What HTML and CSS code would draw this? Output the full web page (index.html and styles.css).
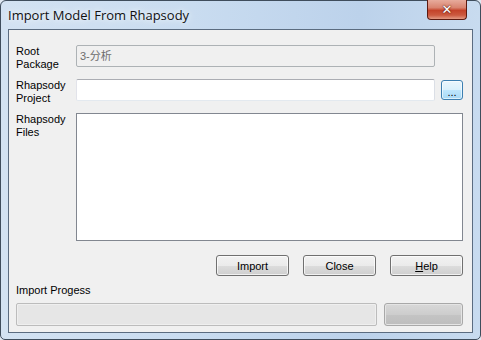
FILE: index.html
```html
<!DOCTYPE html>
<html>
<head>
<title>Import Model From Rhapsody</title>
<link rel="stylesheet" href="styles.css">
</head>
<body>

<div class="window">
    <!-- Title bar -->
    <div class="titlebar">
        <span class="title">Import Model From Rhapsody</span>
        <span class="close-btn">&#x2715;</span>
    </div>

    <!-- Dialog body -->
    <div class="client">
        <div class="field-row">
            <label class="field-label">Root<br>Package</label>
            <div class="textbox disabled">3-分析</div>
        </div>

        <div class="field-row">
            <label class="field-label">Rhapsody<br>Project</label>
            <div class="textbox"></div>
            <button class="browse-btn">...</button>
        </div>

        <div class="field-row files-row">
            <label class="field-label">Rhapsody<br>Files</label>
            <div class="listbox"></div>
        </div>

        <div class="button-row">
            <button class="btn">Import</button>
            <button class="btn">Close</button>
            <button class="btn"><u>H</u>elp</button>
        </div>

        <div class="progress-label">Import Progess</div>
        <div class="progress-row">
            <div class="progress-bar"></div>
            <div class="progress-btn"></div>
        </div>
    </div>
</div>

</body>
</html>
```

FILE: styles.css
```css
:root {
  --face: #f0f0f0;
  --frame-edge: #3f4d5c;
  --input-border: #abadb3;
  --btn-border: #707070;
}

* {
    box-sizing: border-box;
}

body {
    margin: 0;
    width: 481px;
    height: 340px;
    overflow: hidden;
    font-family: 'Liberation Sans', Arial, sans-serif;
    font-size: 11px;
    color: #000;
    background: #dfe8f2;
}

.window {
    width: 481px;
    height: 340px;
    border: 1px solid var(--frame-edge);
    border-radius: 6px 6px 5px 5px;
    background: linear-gradient(to right, #d3e2f2 0%, #c9dcf0 40%, #bcd2eb 75%, #c8dbef 100%);
    padding: 0 7px 6px;
    display: flex;
    flex-direction: column;
}

.titlebar {
    height: 28px;
    display: flex;
    align-items: flex-start;
    position: relative;
}

.title {
    font-family: 'Open Sans', 'Liberation Sans', sans-serif;
    font-size: 13px;
    color: #111;
    margin-top: 5px;
    text-shadow: 0 0 8px #eef4fb, 0 0 4px #eef4fb;
}

.close-btn {
    position: absolute;
    top: -1px;
    right: 6px;
    width: 40px;
    height: 20px;
    border: 1px solid #5c1a10;
    border-top: none;
    border-radius: 0 0 4px 4px;
    background: linear-gradient(to bottom, #e7ab9c 0%, #d98470 40%, #c4432a 55%, #cc5a40 80%, #e39a84 100%);
    color: #fff;
    font-family: 'DejaVu Sans', sans-serif;
    font-size: 13px;
    font-weight: bold;
    text-align: center;
    line-height: 19px;
    text-shadow: 0 0 2px #5c1a10, 0 0 1px #5c1a10;
}

.client {
    flex: 1;
    background: var(--face);
    border: 1px solid #5b6c80;
    padding: 15px 9px 0 7px;
}

.field-row {
    display: flex;
    align-items: flex-start;
    height: 22px;
    margin-bottom: 12px;
}

.field-label {
    width: 60px;
    line-height: 13px;
}

.textbox {
    width: 359px;
    height: 22px;
    background: #fff;
    border: 1px solid var(--input-border);
    border-color: #abadb3 #dbdfe6 #e3e9ef #e2e3ea;
    border-radius: 2px;
    padding: 3px 3px;
    line-height: 14px;
    font-family: 'Liberation Sans', 'Noto Sans CJK SC', sans-serif;
}

.textbox.disabled {
    background: var(--face);
    border-color: #adb2b5;
    color: #6d6d6d;
}

.browse-btn {
    margin-left: 6px;
    margin-top: 1px;
    width: 22px;
    height: 20px;
    padding: 2px 0 0;
    border: 1px solid #3c7fb1;
    border-radius: 3px;
    background: linear-gradient(to bottom, #eaf6fd 0%, #d9f0fc 50%, #bee6fd 51%, #a7d9f5 100%);
    box-shadow: inset 0 0 0 1px rgba(255, 255, 255, 0.6);
    font-family: 'Liberation Sans', sans-serif;
    font-size: 11px;
    line-height: 18px;
}

.files-row {
    height: 128px;
    margin-bottom: 14px;
}

.listbox {
    width: 387px;
    height: 128px;
    background: #fff;
    border: 1px solid #828790;
}

.button-row {
    display: flex;
    justify-content: flex-end;
    gap: 14px;
    height: 21px;
}

.btn {
    width: 73px;
    height: 21px;
    padding: 0;
    border: 1px solid var(--btn-border);
    border-radius: 3px;
    background: linear-gradient(to bottom, #f2f2f2 0%, #ebebeb 50%, #dddddd 51%, #cfcfcf 100%);
    box-shadow: inset 0 0 0 1px rgba(255, 255, 255, 0.7);
    font-family: 'Liberation Sans', sans-serif;
    font-size: 11px;
    color: #000;
}

.progress-label {
    margin-top: 8px;
    line-height: 13px;
    height: 13px;
}

.progress-row {
    display: flex;
    gap: 7px;
    margin-top: 6px;
}

.progress-bar {
    width: 363px;
    height: 23px;
    border: 1px solid #bcbcbc;
    border-radius: 2px;
    background: #e6e6e6;
    box-shadow: inset 0 0 0 1px #efefef;
}

.progress-btn {
    width: 79px;
    height: 23px;
    border: 1px solid #a8a8a8;
    border-radius: 3px;
    background: linear-gradient(to bottom, #d8d8d8 0%, #cdcdcd 50%, #c4c4c4 51%, #bdbdbd 100%);
    box-shadow: inset 0 0 0 1px #e4e4e4;
}
```
